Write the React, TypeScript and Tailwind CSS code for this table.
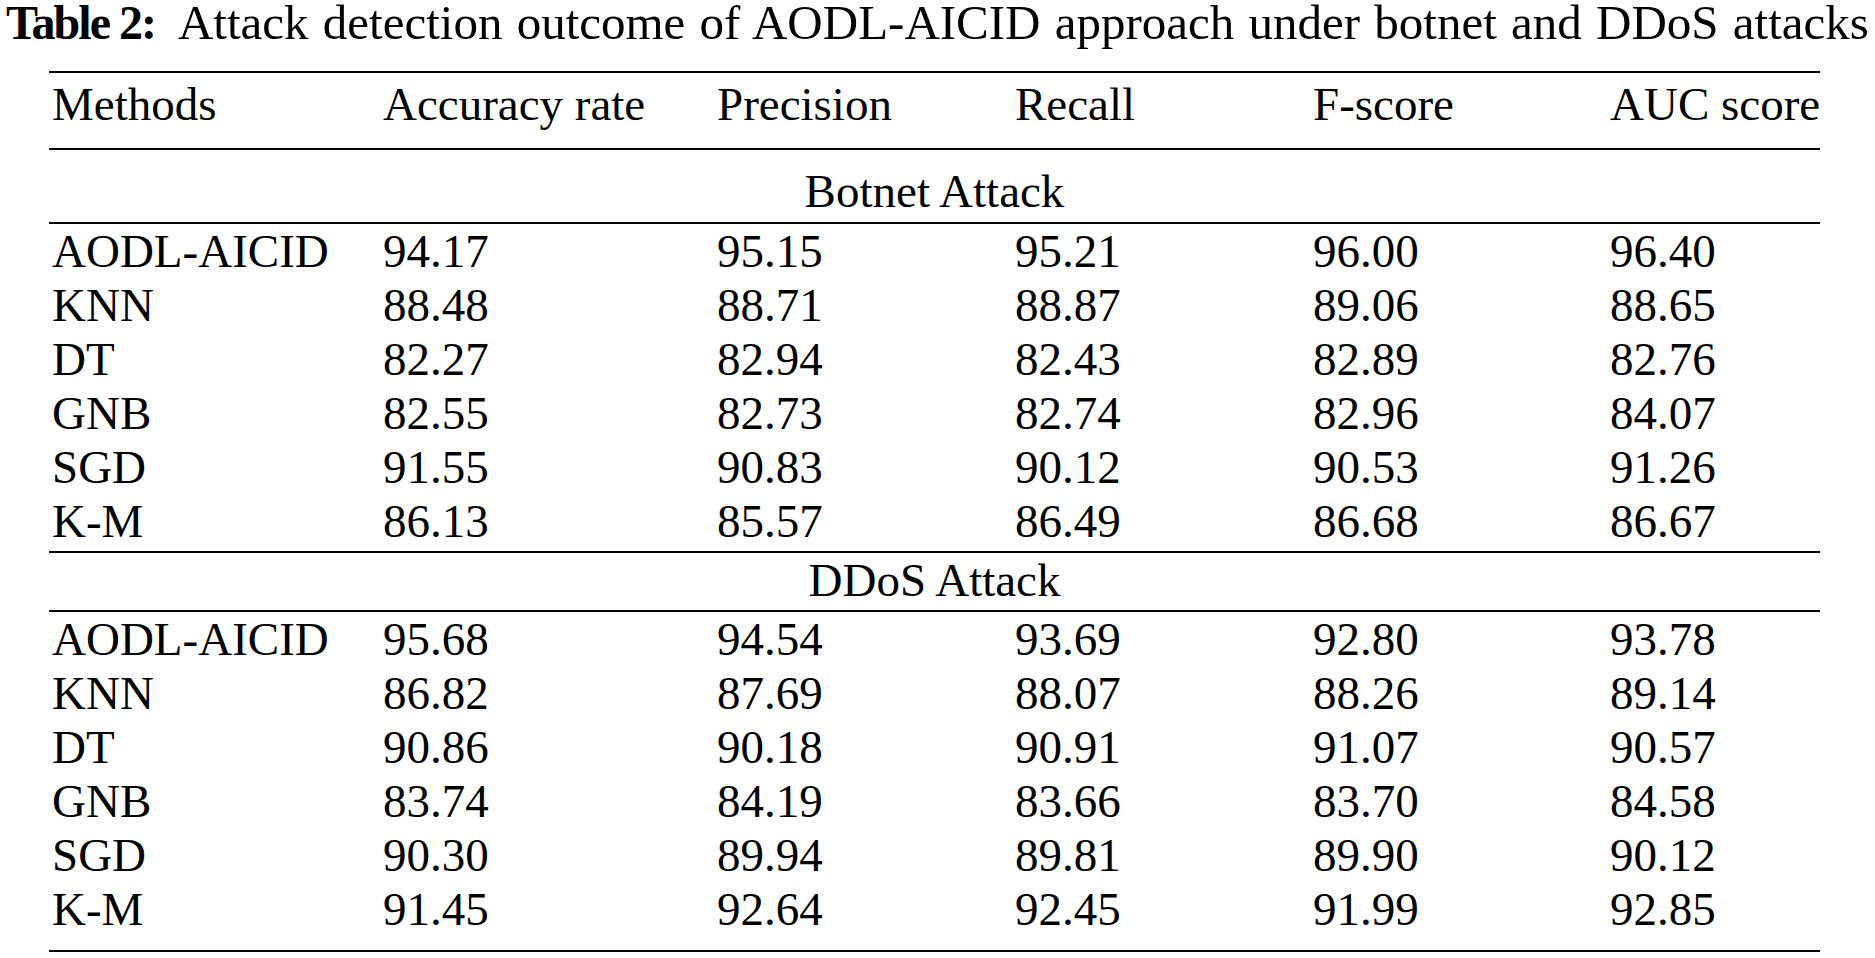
const columns = ["Methods", "Accuracy rate", "Precision", "Recall", "F-score", "AUC score"];

type Row = [string, string, string, string, string, string];

const groups: { title: string; rows: Row[] }[] = [
  {
    title: "Botnet Attack",
    rows: [
      ["AODL-AICID", "94.17", "95.15", "95.21", "96.00", "96.40"],
      ["KNN", "88.48", "88.71", "88.87", "89.06", "88.65"],
      ["DT", "82.27", "82.94", "82.43", "82.89", "82.76"],
      ["GNB", "82.55", "82.73", "82.74", "82.96", "84.07"],
      ["SGD", "91.55", "90.83", "90.12", "90.53", "91.26"],
      ["K-M", "86.13", "85.57", "86.49", "86.68", "86.67"],
    ],
  },
  {
    title: "DDoS Attack",
    rows: [
      ["AODL-AICID", "95.68", "94.54", "93.69", "92.80", "93.78"],
      ["KNN", "86.82", "87.69", "88.07", "88.26", "89.14"],
      ["DT", "90.86", "90.18", "90.91", "91.07", "90.57"],
      ["GNB", "83.74", "84.19", "83.66", "83.70", "84.58"],
      ["SGD", "90.30", "89.94", "89.81", "89.90", "90.12"],
      ["K-M", "91.45", "92.64", "92.45", "91.99", "92.85"],
    ],
  },
];

const grid = "grid grid-cols-[331px_334px_298px_298px_297px_1fr]";

function Cells({ values }: { values: readonly string[] }) {
  return (
    <div className={grid}>
      {values.map((v, i) => (
        <div key={i} className="h-[54px] pl-[3px] leading-[54px] whitespace-nowrap">
          {v}
        </div>
      ))}
    </div>
  );
}

export default function App() {
  return (
    <div
      className="min-h-screen bg-white text-black"
      style={{ fontFamily: '"Liberation Serif", "Times New Roman", serif' }}
    >
      <h1 className="pl-[6px] text-[49px] leading-[46px] font-normal whitespace-nowrap">
        <span className="font-bold tracking-[-2px] text-[48px]">Table 2:</span>
        <span className="ml-[23px] [word-spacing:2px]">
          Attack detection outcome of AODL-AICID approach under botnet and DDoS attacks
        </span>
      </h1>

      <div className="mt-[25px] ml-[49px] w-[1771px] text-[47px]">
        <div className="border-t-2 border-black pt-[4px] pb-[17px]">
          <Cells values={columns} />
        </div>

        <div className="border-t-2 border-black pt-[14px] pb-[4px] text-center leading-[54px]">
          {groups[0].title}
        </div>
        <div className="border-t-2 border-black pb-[3px]">
          {groups[0].rows.map((r) => (
            <Cells key={r[0]} values={r} />
          ))}
        </div>

        <div className="border-t-2 border-black pb-[3px] text-center leading-[54px]">
          {groups[1].title}
        </div>
        <div className="border-t-2 border-b-2 border-black pb-[14px]">
          {groups[1].rows.map((r) => (
            <Cells key={r[0]} values={r} />
          ))}
        </div>
      </div>
    </div>
  );
}
